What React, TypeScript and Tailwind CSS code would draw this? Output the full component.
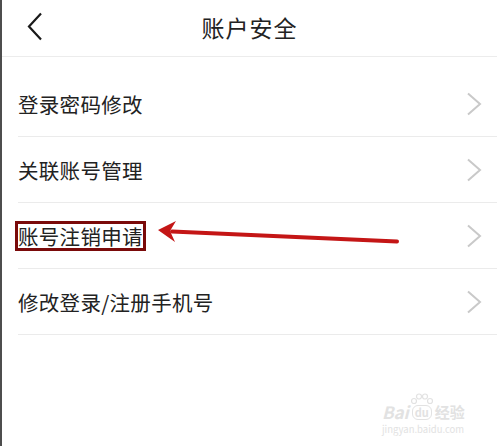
const rows = ["登录密码修改", "关联账号管理", "账号注销申请", "修改登录/注册手机号"];

const Chevron = () => (
  <svg width="16" height="24" viewBox="0 0 16 24" fill="none">
    <path d="M2 1.5 L14 12 L2 22.5" stroke="#c9c9c9" strokeWidth="2" />
  </svg>
);

const App = () => {
  return (
    <div
      className="relative w-[497px] h-[446px] overflow-hidden bg-white border-l-2 border-[#4d4d4d] text-[#222]"
      style={{ fontFamily: '"Noto Sans CJK SC", "Noto Sans", sans-serif' }}
    >
      <header className="relative flex h-[57px] items-center justify-center border-b border-[#ececec]">
        <svg
          className="absolute left-[24px] top-[12px]"
          width="18"
          height="29"
          viewBox="0 0 18 29"
          fill="none"
        >
          <path d="M15 1.5 L3 14.5 L15 27.5" stroke="#1a1a1a" strokeWidth="2.2" />
        </svg>
        <h1 className="text-[23px] font-normal leading-none tracking-[1px] -mt-[1px]">账户安全</h1>
      </header>
      <div className="pt-[14px] pl-[16px]">
        {rows.map((r, i) => (
          <div
            key={r}
            className="flex h-[66px] items-center justify-between border-b border-[#ebebeb] pr-[15px]"
          >
            {i === 2 ? (
              <span className="-ml-[3px] border-[3px] border-[#7a0a0a] text-[20.5px] leading-[24px] tracking-[0.3px]">
                {r}
              </span>
            ) : (
              <span className="text-[20.5px] leading-[24px] tracking-[0.3px]">{r}</span>
            )}
            <Chevron />
          </div>
        ))}
      </div>

      <svg
        className="absolute left-0 top-0 pointer-events-none"
        width="497"
        height="446"
        viewBox="0 0 497 446"
      >
        <path d="M170 231.5 L395 241.5" stroke="#c41616" strokeWidth="4" strokeLinecap="round" />
        <path d="M156 230 L174 221 L168 231 L173 242 Z" fill="#c41616" />
      </svg>

      {/* baidu watermark */}
      <div className="absolute left-[380px] top-[390px] flex w-[92px] flex-col text-[#e2e2e2]">
        <div className="flex h-[30px] items-end gap-[1px]">
          <span className="h-[17px] text-[17px] font-bold italic leading-[17px]">Bai</span>
          <div className="flex flex-col items-center">
            <svg width="24" height="12" viewBox="0 0 24 12" fill="none" stroke="#e2e2e2" strokeWidth="1.2">
              <circle cx="4" cy="8" r="2.5" />
              <circle cx="9" cy="3.5" r="2.5" />
              <circle cx="15" cy="3.5" r="2.5" />
              <circle cx="20" cy="8" r="2.5" />
            </svg>
            <span className="h-[15px] rounded-[6px] border border-[#e2e2e2] px-[2px] text-[11px] font-bold leading-[13px]">du</span>
          </div>
          <span className="h-[16px] text-[15px] font-bold leading-[16px]">经验</span>
        </div>
        <span className="mt-[4px] h-[10px] text-[9.5px] leading-[10px]">jingyan.baidu.com</span>
      </div>
    </div>
  );
};

export default App;
